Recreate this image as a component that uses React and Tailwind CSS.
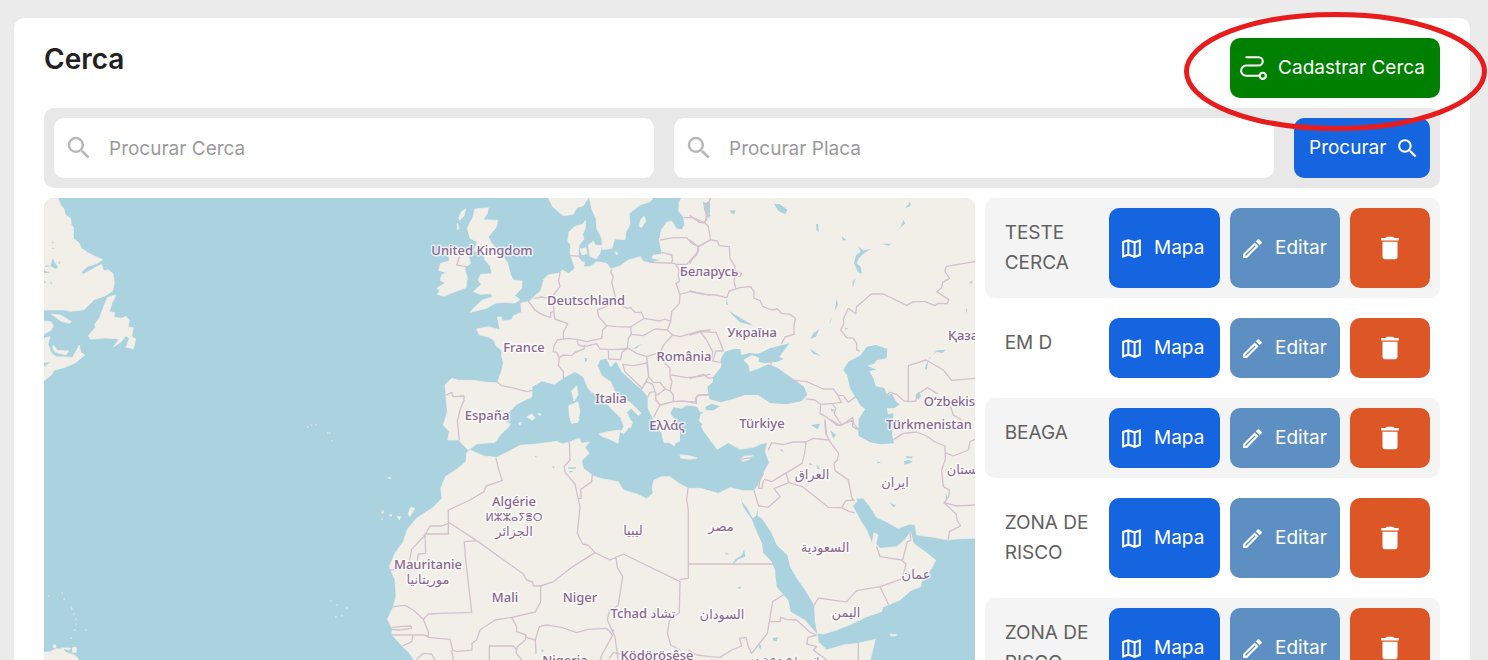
import { MdDelete, MdOutlineEdit, MdOutlineMap, MdSearch } from 'react-icons/md';
import { PiPath } from 'react-icons/pi';

const cercas = [
  { id: 1, nome: 'TESTE CERCA' },
  { id: 2, nome: 'EM D' },
  { id: 3, nome: 'BEAGA' },
  { id: 4, nome: 'ZONA DE RISCO' },
  { id: 5, nome: 'ZONA DE RISCO' },
];

// The map is split in sheets, each drawn at three units per pixel
const sheets = {
  canada: 'translate(0 -3) scale(0.33333)',
  europe: 'translate(376 -3) scale(0.33333)',
  russia: 'translate(646 -3) scale(0.33333)',
  africa: 'translate(336 222) scale(0.33333)',
  arabia: 'translate(636 222) scale(0.33333)',
  atlantic: 'translate(0 222) scale(0.33333)',
};

const land = [
  {
    sheet: 'canada',
    d: 'M0 9 42 9 50 30 60 42 64 60 80 70 82 90 89 98 88 130 106 145 112 160 130 172 150 182 176 194 160 205 130 215 113 230 116 239 140 225 172 208 180 228 192 224 207 236 211 262 206 288 182 303 150 314 120 344 80 349 62 345 0 345Z M190 307 216 300 205 322 196 350 212 353 210 366 232 370 246 364 256 376 252 396 268 398 263 425 275 432 268 462 255 458 246 457 256 430 246 422 232 440 208 456 226 432 180 429 140 433 133 422 155 397 152 388 166 370Z M22 357 50 360 82 380 76 385 50 378Z M0 378 20 380 28 392 22 405 0 418Z M0 430 18 424 12 448 22 474 36 485 86 487 106 450 110 472 122 480 95 503 60 518 30 526 22 540 0 557 0 517 22 500 0 503Z M28 450 40 466 74 468 66 480 34 472 26 460Z',
  },
  {
    sheet: 'europe',
    d: 'M75 570 95 550 115 556 160 556 200 562 232 563 244 530 250 505 244 480 246 468 228 452 222 436 205 426 178 420 170 402 205 395 240 404 232 366 245 366 246 378 275 374 280 362 305 352 302 325 330 318 345 302 362 288 372 252 385 240 418 234 428 225 446 236 465 220 460 205 450 175 452 150 443 140 447 110 465 94 488 88 496 76 496 100 488 118 492 132 478 150 474 185 486 200 495 202 490 215 510 215 530 200 560 205 572 222 600 213 625 195 662 185 668 198 690 204 722 196 696 190 700 180 726 178 718 135 724 105 740 82 755 78 770 102 785 104 794 90 790 65 776 48 778 20 790 0 1665 0 1665 725 838 725 828 690 846 660 832 635 800 630 785 640 760 636 750 655 772 684 765 700 800 722 782 735 762 748 740 735 715 700 698 668 684 640 684 605 664 582 640 562 606 530 588 498 572 516 560 490 540 494 532 512 545 542 572 560 592 604 630 622 664 655 655 662 634 640 620 652 634 680 618 710 602 712 612 695 602 668 570 637 542 602 515 592 504 580 490 545 465 530 430 548 404 568 366 558 336 575 336 605 290 628 266 652 254 680 272 687 262 700 245 715 225 742 170 747 145 765 115 735 83 735 88 710 70 690 82 650 78 605Z M385 9 398 35 430 62 460 58 470 38 490 32 505 9Z M508 9 516 45 528 70 530 100 545 130 548 164 576 160 584 132 615 134 618 110 630 90 628 55 660 30 690 20 700 9Z',
  },
  {
    sheet: 'europe',
    d: 'M165 42 205 38 202 55 190 74 234 76 228 98 205 125 215 145 235 165 262 202 272 240 280 255 306 258 305 280 284 302 300 314 285 324 250 322 225 325 200 340 150 352 165 335 188 315 218 305 212 296 182 298 160 290 184 268 174 256 182 238 216 236 210 212 195 195 190 172 162 168 172 140 150 130 142 100 150 82 158 70Z M85 172 110 160 140 165 152 205 134 218 142 250 138 278 100 292 72 304 52 298 60 285 50 280 76 264 60 256 66 238 82 234 56 226 62 205 88 198Z M137 42 132 62 120 76 116 70 124 50Z M112 85 118 100 112 105Z M505 150 520 138 526 150 546 152 540 175 528 192 510 184Z M480 162 498 158 502 176 486 180Z M584 170 594 174 590 180Z M672 64 678 78 664 98 657 92 662 74Z M455 588 470 572 474 600 462 618Z M446 632 474 620 480 650 474 678 455 686 448 662Z M320 666 335 656 345 668 338 676Z M354 656 364 657 360 662Z M296 684 304 682 300 690Z',
  },
  {
    sheet: 'africa',
    d: 'M900 192 870 170 845 170 822 180 816 205 820 218 800 236 770 222 730 210 715 185 665 176 640 168 610 145 605 122 628 100 615 82 628 66 605 70 598 55 568 66 548 72 530 64 470 72 420 76 385 95 350 112 312 108 270 90 260 98 258 125 230 148 196 170 182 205 186 235 160 262 110 295 82 328 70 365 45 400 28 440 45 480 48 530 40 560 22 598 36 625 36 645 52 662 68 680 85 695 105 725 1470 725 1486 658 1435 670 1390 675 1340 690 1315 665 1312 640 1330 642 1370 630 1420 610 1460 590 1505 575 1508 562 1560 540 1592 512 1622 500 1625 480 1655 445 1667 420 1635 395 1600 370 1592 335 1572 362 1550 380 1500 385 1488 372 1494 345 1482 338 1476 370 1460 330 1442 302 1418 258 1430 245 1430 235 1450 235 1470 260 1490 292 1520 306 1555 325 1590 312 1605 315 1610 345 1660 352 1705 360 1740 356 1785 355 1785 -20 960 -20 970 40 1000 72 1012 88 1045 68 1080 88 1120 82 1142 72 1162 68 1156 95 1168 128 1150 160 1135 195 1122 212 1090 212 1050 203 1015 220 960 205 925 205Z',
  },
  {
    sheet: 'africa',
    d: 'M656 42 685 35 720 30 714 70 690 58 668 50Z M740 -5 758 6 752 22 738 24 732 42 722 36 738 15Z M570 -2 598 -2 592 8 575 6Z M850 25 880 25 872 40 898 66 880 62 884 78 868 68 852 68 846 45Z M900 104 930 108 952 114 930 118 902 114Z M1080 118 1094 108 1118 107 1108 118 1090 124Z M24 172 34 173 28 177Z M92 262 104 265 90 290 84 282Z M52 290 62 290 58 300Z M28 284 36 284 33 290Z M6 272 10 272 10 280 6 280Z M1530 642 1552 644 1545 648 1532 648Z',
  },
  {
    sheet: 'atlantic',
    d: 'M0 697 18 695 35 686 58 687 66 697 90 705 102 714 102 725 0 725Z M52 684 80 684 76 690Z M86 682 97 682 97 697 85 697Z M28 675 36 675 36 682 28 682Z',
  },
];

const seas = [
  {
    sheet: 'arabia',
    d: 'M182 232 190 262 215 297 228 330 246 370 250 398 275 425 285 450 290 500 308 522 325 540 332 575 375 600 412 642 405 605 402 555 375 510 350 475 330 440 322 405 290 375 275 340 245 295 232 288 235 262 228 288 218 295 200 262 188 248Z M0 0 55 0 68 30 90 60 70 85 30 90 0 70Z',
  },
  {
    sheet: 'russia',
    d: 'M132 462 105 470 92 492 94 515 70 545 68 562 52 575 58 612 92 622 130 612 165 600 205 600 240 624 290 628 335 618 352 600 342 575 310 552 285 535 262 518 235 508 212 518 180 530 175 510 160 495 185 480 208 488 205 500 225 505 262 500 280 492 268 485 298 445 240 460 205 476 178 474 155 480 150 462Z M46 636 65 626 90 634 70 646 48 646Z M0 632 20 636 12 650 40 652 20 668 38 690 20 700 45 722 0 722Z',
  },
  {
    sheet: 'russia',
    d: 'M460 525 475 500 510 482 530 455 558 450 592 462 590 490 560 496 552 506 532 512 560 524 538 528 550 550 558 574 584 580 590 600 606 596 618 620 630 628 612 640 590 640 594 658 610 655 606 720 612 745 570 748 540 742 505 722 506 672 526 642 512 632 480 580 472 542Z',
  },
  {
    sheet: 'russia',
    d: 'M38 20 52 25 50 50 62 62 55 70 44 50Z M120 46 136 46 134 56 124 56Z M252 26 270 28 292 44 286 58 265 48Z M378 88 384 86 386 112 380 105Z M455 124 470 136 458 136Z M505 155 520 166 542 162 520 176 506 190 500 205 512 215 515 236 504 232 492 205 498 180 512 170Z M575 146 605 146 595 152Z M640 75 646 85 618 110 632 95Z M660 20 662 32 645 40Z M488 258 496 252 488 278Z M440 310 444 330 434 348Z M416 388 426 368 422 380Z M388 402 378 425 360 432 370 415Z M358 460 392 482 370 476Z M110 312 114 330 108 328Z M118 348 150 368 192 392 150 382 125 358Z M714 496 740 466 768 464 758 474 740 470 716 490 710 525 704 520Z M676 600 686 590 694 604 684 614Z M364 690 390 686 382 702Z M422 640 436 646 424 650Z M838 262 848 256 844 268Z M828 340 832 345 828 355Z M465 398 476 400 466 404Z',
  },
  {
    sheet: 'arabia',
    d: 'M396 16 420 12 412 28Z M450 30 468 45 460 56Z M302 86 312 94 302 94Z M410 132 420 148 412 146Z M388 128 398 134 388 136Z M592 124 604 128 592 130Z M678 108 698 110 696 115 680 115Z M684 120 698 124 690 130 674 134 672 124Z M630 250 648 256 640 262Z M136 398 150 402 138 404Z M156 434 166 418 186 405 192 388 196 410 175 418Z M172 502 184 500 178 508Z M278 654 294 652 290 664 280 662Z M238 674 244 676 242 686 236 684Z M796 216 804 238 798 238Z',
  },
  {
    sheet: 'canada',
    d: 'M4 212 20 212 26 190 34 205 42 216 36 222 20 214 4 216Z M24 140 30 142 26 146Z M26 156 30 162 24 162Z M44 198 50 204 44 208Z M0 258 8 262 0 264Z M18 256 26 268 20 266Z M0 226 18 234 0 234Z',
  },
  {
    sheet: 'europe',
    d: 'M636 462 664 446 650 460Z M494 490 502 488 500 500 495 500Z M860 20 870 22 870 60 862 50Z',
  },
  {
    sheet: 'africa',
    d: 'M565 142 588 142 588 146 565 146Z M568 153 578 153 578 157 568 157Z M516 138 524 140 520 146Z M464 108 472 110 466 112Z M484 686 492 692 486 698Z M692 628 704 630 698 640Z',
  },
];

const borders = [
  {
    sheet: 'europe',
    d: 'M420 232 416 258 420 275 400 300 400 330 402 350 M345 310 365 306 385 310 400 308 M325 318 345 345 365 358 392 368 392 352 402 350 404 372 443 386 430 412 430 432 412 435 402 452 400 470 410 472 418 488 430 480 455 482 465 472 492 462 494 452 M412 435 445 430 472 433 475 450 494 455 530 446 540 462 575 464 615 462 622 458 625 430 634 418 632 396 670 372 M418 488 415 512 430 530 430 548 M472 433 500 440 545 430 548 405 560 392 536 365 532 345 550 338 580 325 M575 224 572 232 580 245 575 262 585 300 585 320 620 340 632 338 645 352 664 352 672 370 720 378 735 372 752 380 742 405 705 402 670 422 634 418 M560 392 590 395 632 396 M742 405 758 420 732 448 720 472 680 485 650 475 622 458 M565 465 566 492 602 494 606 472 620 462 M608 508 640 512 680 504 686 545 665 582 M608 508 615 530 665 578 M680 485 684 520 686 545 700 562 720 562 736 582 715 598 706 600 708 615 720 630 760 620 760 600 750 588 756 560 750 545 750 520 740 510 720 485 M664 582 680 560 698 568 705 590 690 592 684 605 M705 590 710 600 M736 582 750 588 M755 540 800 548 835 545 870 538 M760 620 790 618 830 625 826 610 835 600 870 600 M758 420 780 425 840 408 870 405 M690 202 740 204 765 205 778 225 775 240 778 260 768 265 780 300 778 325 755 350 752 380 M780 298 810 290 870 300 M722 135 760 128 800 128 815 145 835 155 870 135 M835 155 836 168 800 208 770 208 M727 172 755 180 758 195 754 204 M792 68 820 68 850 82 860 75 864 20 M232 562 245 572 285 580 320 590 336 587 M80 600 95 592 100 605 132 603 132 615 120 645 112 680 118 735 M452 182 480 184 M118 186 110 210 140 215 M720 630 702 665',
  },
  {
    sheet: 'russia',
    d: 'M0 288 40 298 78 300 110 308 118 288 150 278 182 275 192 290 192 310 210 316 218 334 245 345 262 342 275 355 300 358 316 370 312 392 312 418 285 426 275 445 M0 135 25 155 20 180 8 190 0 205 M0 62 28 82 45 84 48 70 48 40 62 9 M45 84 55 95 62 135 25 155 M62 135 82 138 88 152 118 155 120 190 135 215 135 228 155 235 150 244 135 244 132 260 138 282 M855 200 770 214 764 228 778 250 758 262 755 278 740 290 776 314 772 326 745 325 735 332 706 320 670 320 650 331 580 297 544 297 500 335 497 356 475 340 460 372 462 385 452 405 470 428 490 430 500 445 500 465 508 468 M0 420 32 410 78 412 90 440 100 468 78 468 68 498 92 502 M30 410 48 432 68 470 65 488 M0 550 40 538 56 550 70 548 M0 620 18 620 22 602 55 598 M310 556 350 560 400 582 430 582 445 602 460 602 475 622 497 605 M350 612 375 615 392 628 430 625 455 622 445 605 M392 628 390 655 412 668 440 690 455 690 488 668 492 688 505 702 M425 625 438 640 432 655 455 690 M408 720 404 680 M655 620 655 512 708 495 760 525 785 556 855 550 M582 605 600 592 620 598 642 618 655 620 678 618 680 600 712 578 742 596 M782 636 790 660 815 675 M240 492 244 512',
  },
  {
    sheet: 'arabia',
    d: 'M265 90 275 68 310 74 340 66 378 66 400 55 445 60 M435 0 440 45 450 65 476 100 472 120 462 130 465 152 505 180 510 205 515 232 522 242 M378 66 374 100 366 130 275 185 254 178 M318 158 326 188 368 200 445 262 485 263 498 242 522 240 M485 263 508 275 522 278 M326 188 282 206 300 230 265 262 238 258 M250 160 240 180 236 205 246 205 250 182 M222 212 236 258 M24 205 20 240 25 270 25 475 0 478 M25 432 278 432 M402 556 415 534 490 545 500 545 530 512 600 500 662 478 M600 500 625 552 M668 470 678 432 665 420 600 410 590 380 M668 420 682 365 692 362 690 338 M642 58 670 40 710 36 740 48 765 66 795 78 796 118 785 150 790 200 808 210 806 230 792 248 828 282 832 302 842 318 808 335 805 358 M796 98 820 108 865 90 870 65 885 58 M792 248 830 258 885 255 M455 0 480 16 520 0 M518 0 518 20 532 28 M310 525 278 545 268 605 300 605 302 592 318 598 350 600 392 638 410 645 384 652 380 672 410 680 400 690 440 720 M268 605 262 640 215 700 205 680 198 652 178 655 185 678 155 690 120 712 90 710 50 705 25 690 M535 668 535 720 M182 118 216 112',
  },
  {
    sheet: 'africa',
    d: 'M348 115 355 145 367 182 318 198 312 215 270 240 205 270 205 342 135 342 137 400 115 402 112 420 M205 310 185 318 150 318 135 345 95 388 88 425 M205 306 290 362 430 462 440 480 458 486 460 498 482 498 520 485 575 442 645 398 M290 362 253 365 256 410 275 577 180 580 145 582 130 598 100 570 75 556 40 560 M568 65 570 120 552 140 556 158 585 192 600 260 592 340 608 372 625 376 645 398 690 420 730 402 900 485 898 578 868 602 862 640 872 675 900 690 M637 165 635 185 602 208 604 235 596 235 M708 412 712 442 728 470 715 555 688 575 682 600 705 650 714 720 M482 498 482 545 466 576 395 592 410 620 410 635 438 645 436 660 412 680 408 698 425 720 M395 592 345 600 300 630 290 660 276 670 276 690 230 695 218 690 210 658 145 652 145 635 130 598 M328 720 328 678 400 678 410 690 M438 652 466 660 468 700 M466 660 478 620 500 615 545 622 590 638 625 628 680 625 698 645 668 700 660 720 M33 628 60 630 95 625 92 618 60 620 36 622 M36 645 130 645 145 650 M215 692 220 720 M30 450 55 448 M98 648 95 665 68 678 M110 718 130 700 155 702 165 720 M688 715 700 698 722 702',
  },
];

const labels = [
  { x: 438, y: 57, text: 'United Kingdom' },
  { x: 542, y: 107, text: 'Deutschland' },
  { x: 480, y: 154, text: 'France' },
  { x: 443, y: 222, text: 'España' },
  { x: 567, y: 205, text: 'Italia' },
  { x: 640, y: 163, text: 'România' },
  { x: 623, y: 232, text: 'Ελλάς' },
  { x: 665, y: 78, text: 'Беларусь' },
  { x: 708, y: 139, text: 'Україна' },
  { x: 718, y: 230, text: 'Türkiye' },
  { x: 885, y: 231, text: 'Türkmenistan' },
  { x: 470, y: 308, text: 'Algérie' },
  { x: 470, y: 323, text: 'ⵍⵣⵣⴰⵢⴻⵔ', small: true },
  { x: 470, y: 338, text: 'الجزائر' },
  { x: 384, y: 371, text: 'Mauritanie' },
  { x: 384, y: 386, text: 'موريتانيا' },
  { x: 461, y: 404, text: 'Mali' },
  { x: 536, y: 404, text: 'Niger' },
  { x: 599, y: 420, text: 'Tchad تشاد' },
  { x: 589, y: 337, text: 'ليبيا' },
  { x: 677, y: 333, text: 'مصر' },
  { x: 768, y: 281, text: 'العراق' },
  { x: 851, y: 289, text: 'ایران' },
  { x: 781, y: 354, text: 'السعودية' },
  { x: 872, y: 381, text: 'عمان' },
  { x: 802, y: 419, text: 'اليمن' },
  { x: 678, y: 421, text: 'السودان' },
  { x: 521, y: 467, text: 'Nigeria' },
  { x: 613, y: 462, text: 'Ködörösêse' },
  { x: 743, y: 467, text: 'ኢትዮጵያ إثيوبيا', small: true },
  { x: 937, y: 142, text: 'Қазақстан' },
  { x: 916, y: 208, text: 'Oʻzbekiston' },
  { x: 929, y: 276, text: 'افغانستان' },
];

// Small islands too tiny for an outline: [x, y] in map units
const islets = [
  [264, 229], [267, 227], [272, 227], [284, 235], [286, 235], [288, 243], [339, 313], [338, 321],
  [287, 403], [293, 407], [303, 410], [298, 418], [292, 419], [27, 409], [28, 411], [30, 416],
  [32, 421], [32, 426], [31, 432], [42, 432], [5, 398], [18, 395], [27, 440], [20, 401],
];

function Sheets({ items, ...props }) {
  return (
    <g {...props}>
      {items.map((item, i) => (
        <path key={i} d={item.d} transform={sheets[item.sheet]} />
      ))}
    </g>
  );
}

function WorldMap() {
  return (
    <svg
      viewBox="0 0 931 462"
      preserveAspectRatio="xMinYMin slice"
      className="block h-full w-full bg-[#aad3df]"
      role="img"
      aria-label="Mapa das cercas"
    >
      <Sheets items={land} fill="#f2efe9" stroke="#f2efe9" strokeWidth="2" strokeLinejoin="round" />
      <Sheets items={seas} fill="#aad3df" />
      <Sheets
        items={borders}
        fill="none"
        stroke="#d3c1d0"
        strokeWidth="4"
        strokeLinejoin="round"
        strokeLinecap="round"
      />
      {islets.map(([x, y]) => (
        <circle key={`${x}-${y}`} cx={x} cy={y} r="1" fill="#d3e2e2" />
      ))}
      <g
        textAnchor="middle"
        fill="#8a6790"
        stroke="#ffffff"
        strokeOpacity="0.7"
        strokeWidth="3"
        strokeLinejoin="round"
        paintOrder="stroke"
        className="font-['Noto_Sans','DejaVu_Sans',sans-serif] font-medium"
      >
        {labels.map((label) => (
          <text
            key={label.text}
            x={label.x}
            y={label.y}
            className={label.small ? 'text-[11px]' : 'text-[13px]'}
          >
            {label.text}
          </text>
        ))}
      </g>
    </svg>
  );
}

function SearchField({ placeholder }) {
  return (
    <label className="flex min-w-0 flex-1 items-center gap-[15px] rounded-[10px] bg-white px-[10px]">
      <MdSearch size={30} className="shrink-0 text-[#b8b8b8]" />
      <input
        type="text"
        placeholder={placeholder}
        aria-label={placeholder}
        className="h-[60px] w-full min-w-0 bg-transparent text-[#666666] outline-none placeholder:text-[#9b9b9b]"
      />
    </label>
  );
}

function CercaRow({ nome }) {
  return (
    <li className="flex gap-[10px] rounded-[10px] p-[10px] odd:bg-[#f4f4f4]">
      <p className="min-w-0 flex-1 py-[10px] pl-[10px] text-[#616161]">{nome}</p>
      <button
        type="button"
        className="flex min-h-[60px] w-[111px] items-center gap-[10px] rounded-[10px] bg-[#1565e0] pl-[10px] text-white"
      >
        <MdOutlineMap size={25} />
        Mapa
      </button>
      <button
        type="button"
        className="flex min-h-[60px] w-[110px] items-center gap-[10px] rounded-[10px] bg-[#5d8fc3] pl-[10px] text-white"
      >
        <MdOutlineEdit size={25} />
        Editar
      </button>
      <button
        type="button"
        aria-label="Excluir"
        className="flex min-h-[60px] w-20 items-center justify-center rounded-[10px] bg-[#dd5726] text-white"
      >
        <MdDelete size={30} />
      </button>
    </li>
  );
}

export default function App() {
  return (
    <div className="flex h-screen flex-col overflow-hidden bg-[#ebebeb] pl-[14px] pr-[18px] pt-[18px] font-[Inter,sans-serif] text-[19px] leading-[30px]">
      <main className="flex min-h-0 flex-1 flex-col gap-[10px] rounded-t-[10px] bg-white px-[30px] pt-5">
        <header className="flex items-start justify-between">
          <h1 className="py-1 text-[28px] font-semibold leading-[34px] text-[#212121]">Cerca</h1>
          <div className="relative">
            <button
              type="button"
              className="flex h-[60px] items-center gap-2 rounded-[10px] bg-[#008000] pl-[7px] pr-[15px] text-white"
            >
              <PiPath size={33} className="mb-1" />
              Cadastrar Cerca
            </button>
            <svg
              viewBox="0 0 303 119"
              preserveAspectRatio="none"
              className="pointer-events-none absolute -left-[46px] -top-[26px] z-10 h-[119px] w-[303px] max-w-none"
              aria-hidden="true"
            >
              <ellipse cx="151.5" cy="59.5" rx="149" ry="57" fill="none" stroke="#e81c1c" strokeWidth="5" />
            </svg>
          </div>
        </header>

        <form className="flex gap-5 rounded-[10px] bg-[#e8e8e8] p-[10px]">
          <SearchField placeholder="Procurar Cerca" />
          <SearchField placeholder="Procurar Placa" />
          <button
            type="button"
            className="flex w-[136px] items-center justify-between rounded-[10px] bg-[#1565e0] pl-[15px] pr-[10px] text-white"
          >
            Procurar
            <MdSearch size={25} />
          </button>
        </form>

        <div className="flex min-h-0 flex-1 gap-[10px]">
          <section className="w-2/3 shrink-0 overflow-hidden rounded-t-[10px]">
            <WorldMap />
          </section>
          <ul className="flex min-w-0 flex-1 flex-col gap-[10px] overflow-hidden [&>li]:shrink-0">
            {cercas.map((cerca) => (
              <CercaRow key={cerca.id} nome={cerca.nome} />
            ))}
          </ul>
        </div>
      </main>
    </div>
  );
}
